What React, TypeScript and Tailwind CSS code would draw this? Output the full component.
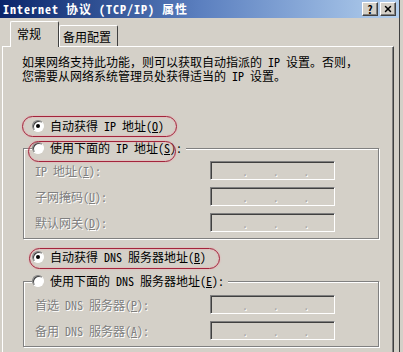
import { X } from 'lucide-react';

const font = "font-['Noto_Sans_Mono_CJK_SC','Noto_Sans_CJK_SC',sans-serif]";

const Radio = ({ checked }: { checked?: boolean }) => (
  <span className="flex h-[12px] w-[12px] shrink-0 items-center justify-center rounded-full border border-t-[#808080] border-l-[#808080] border-r-white border-b-white bg-white shadow-[inset_1px_1px_0_#404040]">
    {checked && <span className="h-[4px] w-[4px] rounded-full bg-black" />}
  </span>
);

const Key = ({ k }: { k: string }) => (
  <span>
    (<span className="underline underline-offset-1">{k}</span>)
  </span>
);

const IpField = () => (
  <div className="flex h-[19px] w-[125px] items-center border border-t-[#808080] border-l-[#808080] border-r-white border-b-white pl-[31px] shadow-[inset_1px_1px_0_#404040]">
    {[0, 1, 2].map((i) => (
      <span key={i} className="w-[31px] text-[#a8a8a8] [text-shadow:1px_1px_0_#fff]">
        .
      </span>
    ))}
  </div>
);

const FieldRow = ({ label }: { label: React.ReactNode }) => (
  <div className="flex items-center">
    <div className="w-[186px] pl-[11px] text-[#808080] [text-shadow:1px_1px_0_#fff]">{label}</div>
    <IpField />
  </div>
);

const Ring = ({ className }: { className: string }) => (
  <div
    className={`pointer-events-none absolute rounded-[11px] border-[1.5px] border-[#a3243c] shadow-[0_0_2px_#f0a0a8,inset_0_0_2px_#f0a0a8] ${className}`}
  />
);

export default function App() {
  return (
    <div className={`relative h-[352px] w-[403px] overflow-hidden bg-[#d4d0c8] text-[12px] leading-[14px] text-black ${font}`}>
      <div className="flex h-full w-[400px] flex-col border-r border-[#404040]">
        {/* title bar */}
        <div className="flex h-[18px] shrink-0 items-center bg-linear-to-r from-[#0a246a] via-[#5b7fbf] to-[#b4d0ee] pl-[3px] pr-[3px]">
          <span className="flex-1 text-[12px] font-bold tracking-[1px] text-white">Internet 协议 (TCP/IP) 属性</span>
          <div className="flex gap-[2px]">
            <button className="flex h-[14px] w-[16px] items-center justify-center border border-t-white border-l-white border-r-[#404040] border-b-[#404040] bg-[#d4d0c8] text-[11px] font-bold leading-none shadow-[inset_-1px_-1px_0_#808080]">
              ?
            </button>
            <button className="flex h-[14px] w-[16px] items-center justify-center border border-t-white border-l-white border-r-[#404040] border-b-[#404040] bg-[#d4d0c8] shadow-[inset_-1px_-1px_0_#808080]">
              <X className="h-[10px] w-[10px]" strokeWidth={3.5} />
            </button>
          </div>
        </div>

        {/* tabs */}
        <div className="flex h-[28px] shrink-0 items-end pl-[10px]">
          <div className="relative z-10 -mb-[1px] flex h-[26px] w-[49px] items-start rounded-t-[2px] border-t border-l border-r border-t-white border-l-white border-r-[#404040] bg-[#d4d0c8] pt-[5px] pl-[6px]">
            常规
          </div>
          <div className="flex h-[21px] w-[59px] items-start rounded-t-[2px] border-t border-l border-r border-t-white border-l-white border-r-[#404040] pt-[4px] pl-[3px]">
            备用配置
          </div>
        </div>

        {/* tab page */}
        <div className="ml-[2px] w-[392px] flex-1 border-t border-l border-r border-t-white border-l-white border-r-[#404040] shadow-[inset_-1px_0_0_#808080]">
          <p className="mt-[8px] pl-[19px]">
            如果网络支持此功能，则可以获取自动指派的 IP 设置。否则，
            <br />
            您需要从网络系统管理员处获得适当的 IP 设置。
          </p>

          <div className="mt-[35px] flex h-[16px] items-center gap-[6px] pl-[29px]">
            <Radio checked />
            <span>
              自动获得 IP 地址<Key k="O" />
            </span>
          </div>

          <fieldset className="ml-[20px] mt-[6px] w-[356px] border border-[#808080] pb-[6px] shadow-[inset_1px_1px_0_#fff,1px_1px_0_#fff]">
            <legend className="ml-[8px] flex h-[16px] items-center gap-[6px] bg-[#d4d0c8] pr-[4px]">
              <Radio />
              <span>
                使用下面的 IP 地址<Key k="S" />:
              </span>
            </legend>
            <div className="mt-[5px] flex flex-col gap-[7px]">
              <FieldRow label={<>IP 地址<Key k="I" />:</>} />
              <FieldRow label={<>子网掩码<Key k="U" />:</>} />
              <FieldRow label={<>默认网关<Key k="D" />:</>} />
            </div>
          </fieldset>

          <div className="mt-[10px] flex h-[16px] items-center gap-[6px] pl-[29px]">
            <Radio checked />
            <span>
              自动获得 DNS 服务器地址<Key k="B" />
            </span>
          </div>

          <fieldset className="ml-[20px] mt-[8px] w-[356px] border border-[#808080] pb-[6px] shadow-[inset_1px_1px_0_#fff,1px_1px_0_#fff]">
            <legend className="ml-[8px] flex h-[16px] items-center gap-[6px] bg-[#d4d0c8] pr-[4px]">
              <Radio />
              <span>
                使用下面的 DNS 服务器地址<Key k="E" />:
              </span>
            </legend>
            <div className="mt-[6px] flex flex-col gap-[7px]">
              <FieldRow label={<>首选 DNS 服务器<Key k="P" />:</>} />
              <FieldRow label={<>备用 DNS 服务器<Key k="A" />:</>} />
            </div>
          </fieldset>
        </div>
      </div>

      {/* red annotation rings */}
      <Ring className="left-[22px] top-[116px] h-[21px] w-[155px]" />
      <Ring className="left-[28px] top-[141px] h-[21px] w-[148px]" />
      <Ring className="left-[29px] top-[248px] h-[21px] w-[191px]" />
    </div>
  );
}
